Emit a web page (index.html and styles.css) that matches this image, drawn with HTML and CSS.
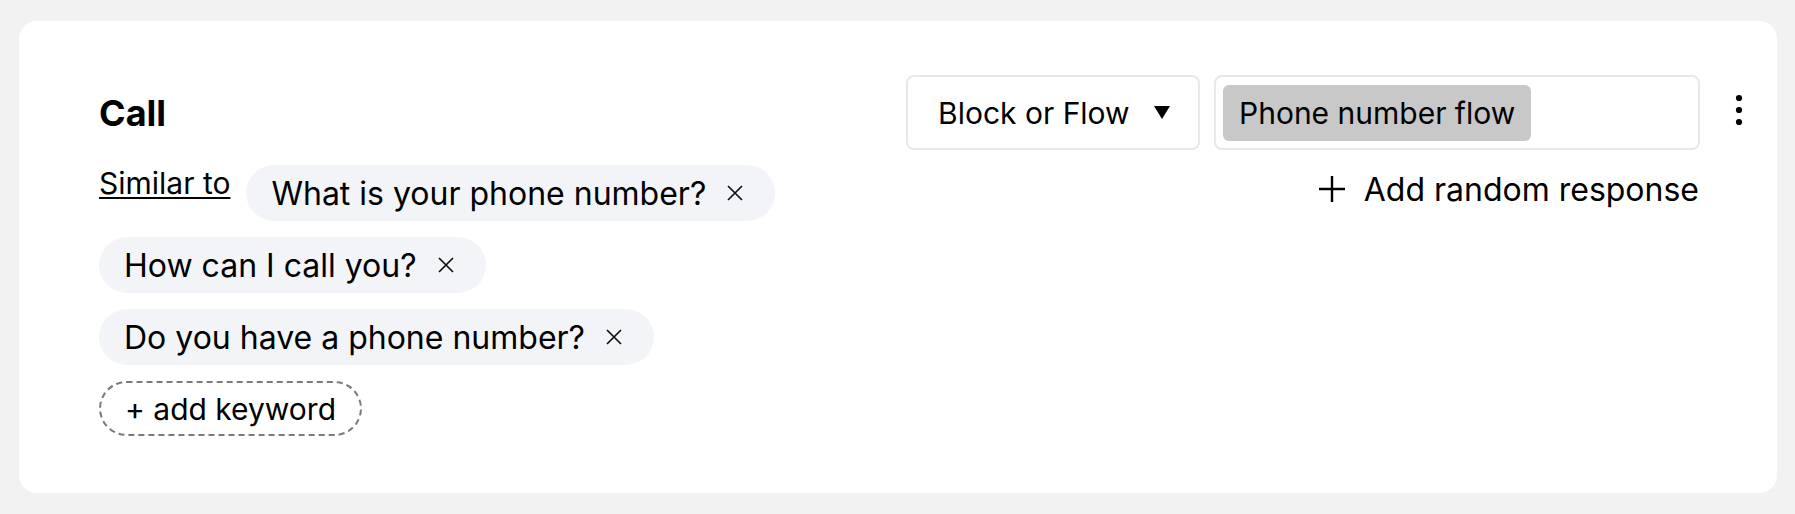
FILE: index.html
```html
<!DOCTYPE html>
<html lang="en">
<head>
<meta charset="utf-8">
<title>Call</title>
<link rel="stylesheet" href="styles.css">
</head>
<body>
<div class="card">
  <div class="main">
    <div class="title-row"><h2 class="title">Call</h2></div>
    <div class="keywords">
      <span class="similar">Similar to</span>
      <span class="chip">What is your phone number?<span class="x"><svg viewBox="0 0 16 16" width="16" height="16"><path d="M1 1 L15 15 M15 1 L1 15" stroke="#111" stroke-width="1.7" fill="none"/></svg></span></span>
      <span class="chip">How can I call you?<span class="x"><svg viewBox="0 0 16 16" width="16" height="16"><path d="M1 1 L15 15 M15 1 L1 15" stroke="#111" stroke-width="1.7" fill="none"/></svg></span></span>
      <span class="chip">Do you have a phone number?<span class="x"><svg viewBox="0 0 16 16" width="16" height="16"><path d="M1 1 L15 15 M15 1 L1 15" stroke="#111" stroke-width="1.7" fill="none"/></svg></span></span>
      <span class="add-keyword">+ add keyword</span>
    </div>
  </div>
  <div class="side">
    <div class="controls">
      <div class="dropdown">
        <span>Block or Flow</span>
        <svg class="caret" viewBox="0 0 16 13" width="16" height="13"><path d="M0 0 H16 L8 13 Z" fill="#000"/></svg>
      </div>
      <div class="flow-box"><span class="flow-chip">Phone number flow</span></div>
      <div class="kebab">
        <svg viewBox="0 0 24 36" width="24" height="36"><circle cx="12" cy="6" r="3.1" fill="#000"/><circle cx="12" cy="18" r="3.1" fill="#000"/><circle cx="12" cy="30" r="3.1" fill="#000"/></svg>
      </div>
    </div>
    <div class="random-row">
      <span class="add-random">
        <svg class="plus" viewBox="0 0 26 26" width="26" height="26"><path d="M13 0 V26 M0 13 H26" stroke="#000" stroke-width="2.4" fill="none"/></svg>
        <span>Add random response</span>
      </span>
    </div>
  </div>
</div>
</body>
</html>
```

FILE: styles.css
```css
* { box-sizing: border-box; }
html, body { margin: 0; }
body {
  background: #f2f2f2;
  padding: 21px 18px 21px 19px;
  font-family: "Inter", "Liberation Sans", sans-serif;
  color: #000;
}
.card {
  background: #fff;
  border-radius: 18px;
  padding: 54px 26px 57px 80px;
  display: flex;
  gap: 40px;
  min-height: 472px;
}
.main { flex: 1; min-width: 0; }
.title-row { height: 75px; display: flex; align-items: center; }
.title { margin: 0; font-size: 36px; font-weight: 700; line-height: 1; }
.keywords {
  margin-top: 15px;
  display: flex;
  flex-wrap: wrap;
  align-items: flex-start;
  gap: 16px;
}
.similar {
  font-size: 30px;
  text-decoration: underline;
  text-underline-offset: 3px;
  text-decoration-thickness: 2px;
  line-height: 1.2;
  margin-top: 0;
}
.chip {
  height: 56px;
  border-radius: 28px;
  background: #f3f4f8;
  display: inline-flex;
  align-items: center;
  padding: 0 32px 0 25px;
  font-size: 32px;
  white-space: nowrap;
}
.x { display: inline-flex; margin-left: 21px; }
.add-keyword {
  height: 55px;
  border: 2px dashed #7a7a7a;
  border-radius: 28px;
  display: inline-flex;
  align-items: center;
  padding: 0 24px;
  font-size: 30px;
  white-space: nowrap;
}
.side { display: flex; flex-direction: column; }
.controls { display: flex; align-items: center; gap: 14px; }
.dropdown {
  width: 294px;
  height: 75px;
  border: 2px solid #e8e8e8;
  border-radius: 8px;
  display: flex;
  align-items: center;
  justify-content: space-between;
  padding: 0 28px 0 30px;
  font-size: 30px;
}
.flow-box {
  width: 486px;
  height: 75px;
  border: 2px solid #e8e8e8;
  border-radius: 8px;
  padding: 8px 7px;
  display: flex;
  align-items: center;
}
.flow-chip {
  height: 56px;
  background: #c8c8c8;
  border-radius: 6px;
  display: inline-flex;
  align-items: center;
  padding: 0 16px;
  font-size: 30px;
  white-space: nowrap;
}
.kebab { width: 24px; margin-left: 13px; margin-bottom: 5px; display: flex; }
.random-row {
  display: flex;
  justify-content: flex-end;
  margin-right: 51px;
  margin-top: 14px;
}
.add-random {
  height: 50px;
  display: inline-flex;
  align-items: center;
  gap: 19px;
  padding-right: 1px;
  font-size: 32px;
}
.plus { display: block; }
```
